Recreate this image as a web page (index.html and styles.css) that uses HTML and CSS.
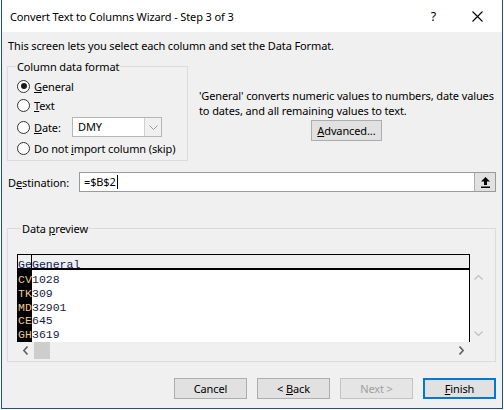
FILE: index.html
```html
<!DOCTYPE html>
<html>
<head>
<meta charset="utf-8">
<link rel="stylesheet" href="styles.css">
</head>
<body>
<div class="window">
  <div class="titlebar">
    <span class="title">Convert Text to Columns Wizard - Step 3 of 3</span>
    <span class="help">?</span>
    <svg class="close" width="11" height="11" viewBox="0 0 11 11"><path d="M0.5 0.5L10.5 10.5M10.5 0.5L0.5 10.5" stroke="#000" stroke-width="1.1" fill="none"/></svg>
  </div>
  <div class="content">
    <p class="intro">This screen lets you select each column and set the Data Format.</p>
    <div class="top">
      <fieldset class="group format">
        <legend>Column data format</legend>
        <div class="opt r1"><span class="radio checked"></span><span class="lbl"><u>G</u>eneral</span></div>
        <div class="opt r2"><span class="radio"></span><span class="lbl"><u>T</u>ext</span></div>
        <div class="opt r3"><span class="radio"></span><span class="lbl datelbl"><u>D</u>ate:</span>
          <div class="combo"><span class="combo-text">DMY</span><span class="combo-btn"><svg width="9" height="5" viewBox="0 0 9 5"><polyline points="0.5,0.5 4.5,4.5 8.5,0.5" fill="none" stroke="#9a9a9a" stroke-width="1"/></svg></span></div>
        </div>
        <div class="opt r4"><span class="radio"></span><span class="lbl">Do not <u>i</u>mport column (skip)</span></div>
      </fieldset>
      <div class="info">
        <p class="info-text">'General' converts numeric values to numbers, date values<br>to dates, and all remaining values to text.</p>
        <button class="btn adv"><u>A</u>dvanced...</button>
      </div>
    </div>
    <div class="dest">
      <span class="dest-lbl">D<u>e</u>stination:</span>
      <div class="dest-input">
        <span class="dest-text">=$B$2<span class="caret"></span></span>
        <span class="dest-btn"><svg width="9" height="11" viewBox="0 0 9 11"><path d="M4.5 0L9 4.5H6V8H3V4.5H0Z" fill="#000"/><rect x="0" y="9.5" width="9" height="1.5" fill="#000"/></svg></span>
      </div>
    </div>
    <fieldset class="group preview">
      <legend>Data <u>p</u>review</legend>
      <div class="scrollview">
        <div class="table">
          <div class="hdr"><span class="c1">Ge</span><span class="c2">General</span></div>
          <div class="rows">
            <div class="row"><span class="c1">CV</span><span class="c2">1028</span></div>
            <div class="row"><span class="c1">TK</span><span class="c2">309</span></div>
            <div class="row"><span class="c1">MD</span><span class="c2">32901</span></div>
            <div class="row"><span class="c1">CE</span><span class="c2">645</span></div>
            <div class="row"><span class="c1">GH</span><span class="c2">3619</span></div>
          </div>
        </div>
        <div class="vscroll">
          <span class="arrow"><svg width="9" height="5" viewBox="0 0 9 5"><polyline points="0.5,4.5 4.5,0.5 8.5,4.5" fill="none" stroke="#c2c2c2" stroke-width="1.3"/></svg></span>
          <span class="arrow"><svg width="9" height="5" viewBox="0 0 9 5"><polyline points="0.5,0.5 4.5,4.5 8.5,0.5" fill="none" stroke="#c2c2c2" stroke-width="1.3"/></svg></span>
        </div>
        <div class="hscroll">
          <span class="arrow"><svg width="5" height="9" viewBox="0 0 5 9"><polyline points="4.5,0.5 0.8,4.5 4.5,8.5" fill="none" stroke="#606060" stroke-width="1.6"/></svg></span>
          <span class="thumb"></span>
          <span class="track"></span>
          <span class="arrow"><svg width="5" height="9" viewBox="0 0 5 9"><polyline points="0.5,0.5 4.2,4.5 0.5,8.5" fill="none" stroke="#606060" stroke-width="1.6"/></svg></span>
        </div>
        <div class="corner"></div>
      </div>
    </fieldset>
    <div class="buttons">
      <button class="btn">Cancel</button>
      <button class="btn">&lt; <u>B</u>ack</button>
      <button class="btn disabled">Next &gt;</button>
      <button class="btn default"><u>F</u>inish</button>
    </div>
  </div>
</div>
</body>
</html>
```

FILE: styles.css
```css
html, body {
  margin: 0;
  padding: 0;
  background: #ffffff;
}
body {
  font-family: "Segoe UI", "Noto Sans", sans-serif;
  font-size: 11px;
  letter-spacing: -0.12px;
  color: #000;
}
.window {
  margin-left: 1px;
  width: 502px;
  height: 409px;
  box-sizing: border-box;
  border: 1px solid #1d5185;
  border-top: none;
  background: #f0f0f0;
  display: flex;
  flex-direction: column;
}
.titlebar {
  height: 32px;
  flex: none;
  background: #fff;
  display: flex;
  align-items: center;
  padding-left: 8px;
}
.title {
  flex: 1;
  font-size: 11px;
}
.help {
  font-size: 12.5px;
  margin-right: 36px;
}
.close {
  margin-right: 19px;
}
.content {
  flex: 1;
  display: flex;
  flex-direction: column;
  padding: 0 0 0 6px;
}
.intro {
  margin: 6px 0 0 0;
  line-height: 15px;
}
.top {
  display: flex;
  margin-top: 6px;
}
.group {
  margin: 0;
  border: 1px solid #dcdcdc;
  padding: 0;
}
.group legend {
  padding: 0 1px;
  line-height: 15px;
  margin-left: 4px;
}
.format {
  margin-left: -1px;
  width: 181px;
  height: 102px;
  flex: none;
  box-sizing: border-box;
  padding: 1px 0 0 4px;
}
.opt {
  display: flex;
  align-items: center;
  height: 20px;
  white-space: nowrap;
}
.r1 { margin-top: 1px; }
.r2 { margin-top: -1px; }
.r3 { margin-top: 2px; }
.r4 { margin-top: 1px; }
.radio {
  width: 11px;
  height: 11px;
  border: 1px solid #333;
  border-radius: 50%;
  background: #fff;
  margin-left: 5px;
  margin-right: 4px;
  position: relative;
  flex: none;
}
.radio.checked::after {
  content: "";
  position: absolute;
  left: 2.5px;
  top: 2.5px;
  width: 6px;
  height: 6px;
  border-radius: 50%;
  background: #1a1a1a;
}
.lbl { line-height: 15px; }
.datelbl { width: 38px; }
.combo {
  width: 90px;
  height: 20px;
  box-sizing: border-box;
  border: 1px solid #b5b5b5;
  background: #fff;
  display: flex;
}
.combo-text {
  flex: 1;
  padding-left: 5px;
  line-height: 18px;
}
.combo-btn {
  width: 16px;
  border-left: 1px solid #d0d0d0;
  background: #f0f0f0;
  display: flex;
  align-items: center;
  justify-content: center;
}
.info {
  margin-left: 11px;
  margin-top: 29px;
  display: flex;
  flex-direction: column;
  align-items: flex-start;
}
.info-text {
  margin: 0;
  line-height: 15px;
  white-space: nowrap;
}
.btn {
  font-family: inherit;
  font-size: 11px;
  letter-spacing: -0.12px;
  color: #000;
  background: #e1e1e1;
  border: 1px solid #adadad;
  box-sizing: border-box;
  height: 21px;
  width: 73px;
  padding: 0;
  line-height: 17px;
}
.adv {
  align-self: center;
  margin-top: 2px;
  width: 71px;
  height: 21px;
}
.dest {
  display: flex;
  align-items: center;
  margin-top: 11px;
  height: 20px;
}
.dest-lbl { width: 71px; }
.dest-input {
  width: 417px;
  height: 20px;
  box-sizing: border-box;
  border: 1px solid #9a9a9a;
  background: #fff;
  display: flex;
}
.dest-text {
  flex: 1;
  padding-left: 4px;
  line-height: 18px;
  display: flex;
  align-items: center;
}
.caret {
  display: inline-block;
  width: 1px;
  height: 14px;
  background: #000;
  margin-left: 1px;
}
.dest-btn {
  width: 20px;
  background: #e1e1e1;
  border-left: 1px solid #adadad;
  display: flex;
  align-items: center;
  justify-content: center;
}
.preview {
  margin: 29px 0 0 -1px;
  width: 489px;
  box-sizing: border-box;
  padding: 18px 0 2px 9px;
}
.scrollview {
  width: 470px;
  height: 105px;
  display: grid;
  grid-template-columns: 453px 17px;
  grid-template-rows: 88px 17px;
}
.table {
  border: 1px solid #000;
  border-bottom: none;
  background: #fff;
  font-family: "Liberation Mono", monospace;
  font-size: 11.5px;
  letter-spacing: 0;
  overflow: hidden;
}
.hdr, .row {
  display: flex;
  white-space: nowrap;
}
.hdr {
  height: 13px;
  line-height: 19px;
  background: #f0f0f0;
  border-bottom: 2px solid #000;
  color: #10205a;
}
.rows {
  padding-top: 3px;
  background: linear-gradient(to right, #000 14px, #fff 14px);
  height: 75px;
}
.row {
  height: 13.75px;
  line-height: 14px;
}
.c1 {
  width: 13px;
  overflow: hidden;
  flex: none;
}
.hdr .c1 {
  border-right: 1px solid #000;
  overflow: visible;
}
.row .c1 {
  color: #eec88c;
  width: 14px;
}
.row .c2 { color: #1a1a40; }
.vscroll {
  padding-top: 15px;
  display: flex;
  flex-direction: column;
  justify-content: space-between;
}
.vscroll .arrow {
  height: 17px;
  display: flex;
  align-items: center;
  justify-content: center;
}
.hscroll {
  display: flex;
}
.hscroll .arrow {
  width: 17px;
  display: flex;
  align-items: center;
  justify-content: center;
}
.thumb {
  width: 16px;
  background: #cdcdcd;
}
.track { flex: 1; }
.buttons {
  margin-top: 16px;
  display: flex;
  justify-content: flex-end;
  gap: 10px;
  padding-right: 6px;
}
.btn.disabled {
  color: #a0a0a0;
  background: #e5e5e5;
  border-color: #c4c4c4;
}
.btn.default {
  border: 1px solid #0078d7;
  box-shadow: inset 0 0 0 1px #0078d7;
}
```
